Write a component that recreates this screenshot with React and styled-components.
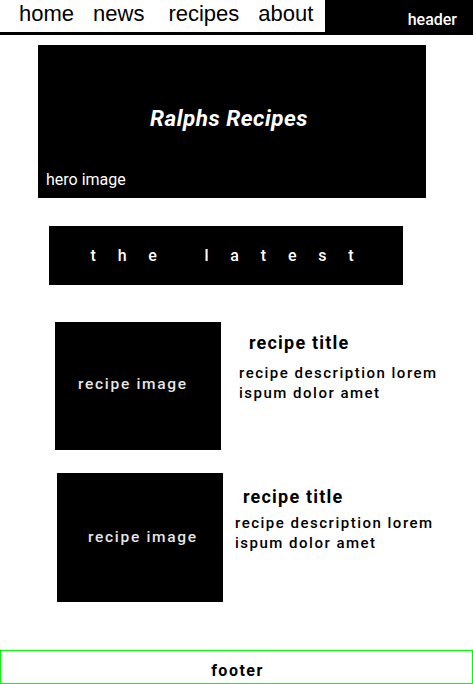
import React from "react";
import styled, { createGlobalStyle } from "styled-components";

const GlobalStyle = createGlobalStyle`
body {
  margin: 0;
  background: white;
  font-family: Roboto, "Liberation Sans", sans-serif;
}
`;

const Header = styled.header`
display: flex;
align-items: flex-start;
justify-content: space-between;
height: 35px;
background-color: black;
`;

const Nav = styled.nav`
display: flex;
gap: 19px;
width: 325px;
height: 32px;
box-sizing: border-box;
padding-left: 19px;
background-color: white;
font-family: "Liberation Sans", Arial, sans-serif;
font-size: 22px;
line-height: 27px;
color: black;
`;

const NavLink = styled.a`
color: inherit;
text-decoration: none;
margin-left: ${(p) => p.$shift || 0}px;
`;

const HeaderLabel = styled.span`
color: white;
font-size: 16px;
font-weight: 500;
padding: 10px 16px 0 0;
line-height: 20px;
`;

const Hero = styled.section`
display: flex;
flex-direction: column;
justify-content: space-between;
margin: 10px 0 0 38px;
width: 388px;
height: 153px;
box-sizing: border-box;
padding: 60px 0 8px 8px;
background-color: black;
color: white;
`;

const HeroTitle = styled.h1`
margin: 0;
padding-right: 14px;
text-align: center;
font-size: 22.5px;
font-style: italic;
font-weight: bold;
letter-spacing: 0.5px;
line-height: 26px;
`;

const HeroCaption = styled.span`
font-size: 16px;
line-height: 20px;
`;

const Latest = styled.div`
display: flex;
align-items: center;
justify-content: center;
margin: 28px 0 0 49px;
width: 354px;
height: 59px;
box-sizing: border-box;
padding: 0 0 1px 14px;
background-color: black;
color: white;
font-size: 16px;
font-weight: 500;
letter-spacing: 21.8px;
`;

const RecipeList = styled.div`
display: flex;
flex-direction: column;
gap: 23px;
margin-top: 37px;
`;

const Recipe = styled.article`
display: flex;
align-items: flex-start;
margin-left: ${(p) => p.$left}px;
`;

const RecipeImage = styled.div`
display: flex;
align-items: center;
flex-shrink: 0;
width: 166px;
height: ${(p) => p.$height}px;
box-sizing: border-box;
padding: 0 0 ${(p) => p.$lift}px ${(p) => p.$inset}px;
background-color: black;
color: #e6e6e6;
font-size: 15.5px;
font-weight: 500;
letter-spacing: 1.7px;
`;

const RecipeText = styled.div`
display: flex;
flex-direction: column;
padding-top: ${(p) => p.$top}px;
margin-left: ${(p) => p.$left}px;
color: black;
`;

const RecipeTitle = styled.h2`
margin: 0 0 ${(p) => p.$gap}px ${(p) => p.$indent}px;
font-size: 18px;
font-weight: bold;
letter-spacing: 1.2px;
line-height: 22px;
`;

const RecipeDesc = styled.p`
margin: 0;
width: 215px;
font-size: 15px;
font-weight: 500;
letter-spacing: 1.5px;
line-height: 20px;
`;

const Footer = styled.footer`
display: flex;
align-items: flex-end;
justify-content: center;
margin-top: 48px;
height: 34px;
box-sizing: border-box;
padding: 0 0 3px 2px;
border: 1px solid #00ff00;
font-size: 16px;
font-weight: bold;
letter-spacing: 1.5px;
`;

const recipes = [
  { left: 55, height: 128, inset: 23, lift: 4, textLeft: 18, top: 10, indent: 10, gap: 9 },
  { left: 57, height: 129, inset: 31, lift: 1, textLeft: 12, top: 13, indent: 8, gap: 5 },
];

export default function App() {
  return (
    <>
      <GlobalStyle />
      <Header>
        <Nav>
          <NavLink href="#">home</NavLink>
          <NavLink href="#">news</NavLink>
          <NavLink href="#" $shift={5}>recipes</NavLink>
          <NavLink href="#">about</NavLink>
        </Nav>
        <HeaderLabel>header</HeaderLabel>
      </Header>
      <Hero>
        <HeroTitle>Ralphs Recipes</HeroTitle>
        <HeroCaption>hero image</HeroCaption>
      </Hero>
      <Latest>the latest</Latest>
      <RecipeList>
        {recipes.map((r, i) => (
          <Recipe key={i} $left={r.left}>
            <RecipeImage $height={r.height} $inset={r.inset} $lift={r.lift}>
              recipe image
            </RecipeImage>
            <RecipeText $top={r.top} $left={r.textLeft}>
              <RecipeTitle $indent={r.indent} $gap={r.gap}>recipe title</RecipeTitle>
              <RecipeDesc>recipe description lorem ispum dolor amet</RecipeDesc>
            </RecipeText>
          </Recipe>
        ))}
      </RecipeList>
      <Footer>footer</Footer>
    </>
  );
}
